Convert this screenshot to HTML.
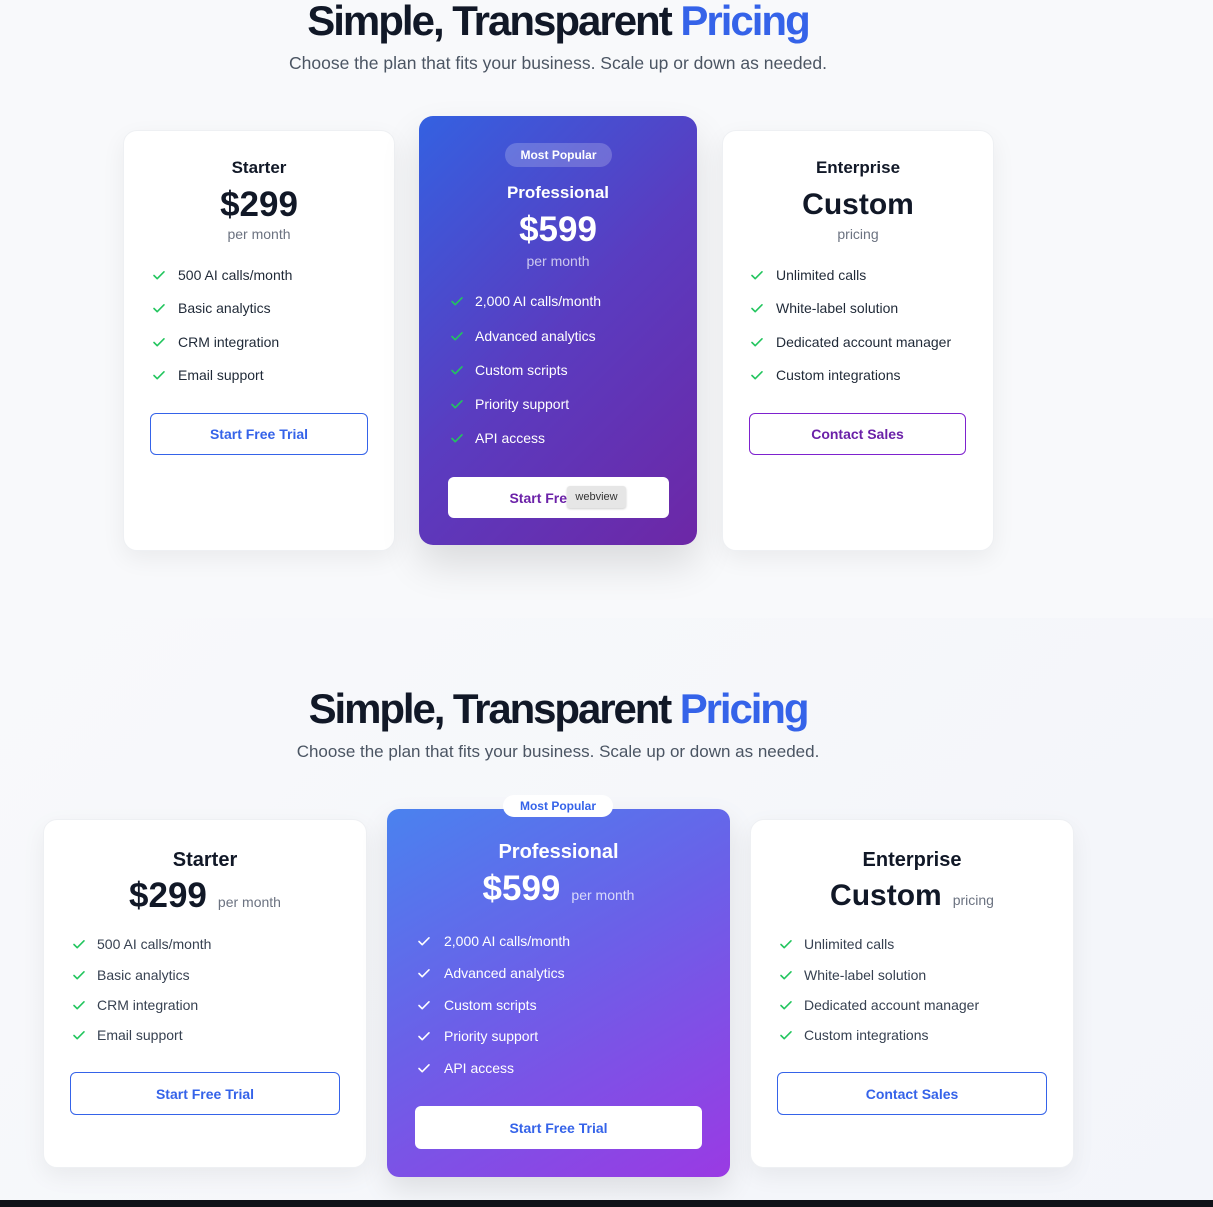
<!DOCTYPE html>
<html><head><meta charset="utf-8"><style>
*{margin:0;padding:0;box-sizing:border-box}
body{width:1213px;height:1207px;position:relative;overflow:hidden;font-family:"Liberation Sans",sans-serif;background:#f8f9fb;color:#111827}
.a{position:absolute}
.c{text-align:center;white-space:nowrap}
.sec2{left:0;top:618px;width:1213px;height:582px;background:linear-gradient(135deg,#f8f9fb,#f3f5fa)}
.card{background:#fff;border-radius:14px;box-shadow:0 8px 24px rgba(0,0,0,.06);border:1px solid #eef0f3}
h1{font-size:42px;font-weight:700;letter-spacing:-2px;color:#111827}
h1 span{color:#3563e9}
.sub{font-size:17px;color:#4b5563}
.f{font-size:14px;color:#1f2937;white-space:nowrap;line-height:17px}
.f svg{position:absolute;left:-26px;top:1px}
.btn{border-radius:6px;font-size:14px;font-weight:700;display:flex;align-items:center;justify-content:center}
</style></head><body>
<svg width="0" height="0" style="position:absolute"><defs><symbol id="ck" viewBox="0 0 14 14"><path d="M2 7.5l3.2 3.2L12 3.8" fill="none" stroke="currentColor" stroke-width="1.6" stroke-linecap="round" stroke-linejoin="round"/></symbol></defs></svg>

<!-- top section -->
<h1 class="a c" style="left:0;width:1116px;top:-4px;line-height:50px">Simple, Transparent <span>Pricing</span></h1>
<div class="a c sub" style="left:0;width:1116px;top:53px;font-size:17.5px">Choose the plan that fits your business. Scale up or down as needed.</div>

<div class="a card" style="left:123px;top:130px;width:272px;height:421px"></div>
<div class="a c" style="left:123px;width:272px;top:158px;font-size:17px;font-weight:700">Starter</div>
<div class="a c" style="left:123px;width:272px;top:185px;font-size:35px;font-weight:700">$299</div>
<div class="a c" style="left:123px;width:272px;top:226px;font-size:14px;color:#6b7280">per month</div>
<div class="a f" style="left:178px;top:267px"><svg width="14" height="14" style="color:#22c55e"><use href="#ck"/></svg>500 AI calls/month</div>
<div class="a f" style="left:178px;top:300px"><svg width="14" height="14" style="color:#22c55e"><use href="#ck"/></svg>Basic analytics</div>
<div class="a f" style="left:178px;top:334px"><svg width="14" height="14" style="color:#22c55e"><use href="#ck"/></svg>CRM integration</div>
<div class="a f" style="left:178px;top:367px"><svg width="14" height="14" style="color:#22c55e"><use href="#ck"/></svg>Email support</div>
<div class="a btn" style="left:150px;top:413px;width:218px;height:42px;border:1.5px solid #3563e9;color:#3563e9">Start Free Trial</div>

<div class="a" style="left:419px;top:116px;width:278px;height:429px;border-radius:14px;background:linear-gradient(135deg,#3461e1,#5a3cc0 50%,#6d27a6);box-shadow:0 20px 40px rgba(0,0,0,.12)"></div>
<div class="a c" style="left:505px;top:143px;width:107px;height:24px;border-radius:12px;background:rgba(255,255,255,.2);color:#fff;font-size:12px;font-weight:700;line-height:24px">Most Popular</div>
<div class="a c" style="left:419px;width:278px;top:183px;font-size:17px;font-weight:700;color:#fff">Professional</div>
<div class="a c" style="left:419px;width:278px;top:210px;font-size:35px;font-weight:700;color:#fff">$599</div>
<div class="a c" style="left:419px;width:278px;top:253px;font-size:14px;color:rgba(255,255,255,.7)">per month</div>
<div class="a f" style="left:475px;top:293px;color:#fff"><svg width="14" height="14" style="color:#22c55e;left:-25px"><use href="#ck"/></svg>2,000 AI calls/month</div>
<div class="a f" style="left:475px;top:328px;color:#fff"><svg width="14" height="14" style="color:#22c55e;left:-25px"><use href="#ck"/></svg>Advanced analytics</div>
<div class="a f" style="left:475px;top:362px;color:#fff"><svg width="14" height="14" style="color:#22c55e;left:-25px"><use href="#ck"/></svg>Custom scripts</div>
<div class="a f" style="left:475px;top:396px;color:#fff"><svg width="14" height="14" style="color:#22c55e;left:-25px"><use href="#ck"/></svg>Priority support</div>
<div class="a f" style="left:475px;top:430px;color:#fff"><svg width="14" height="14" style="color:#22c55e;left:-25px"><use href="#ck"/></svg>API access</div>
<div class="a btn" style="left:448px;top:477px;width:221px;height:41px;background:#fff;color:#6b21a8">Start Free Trial</div>
<div class="a c" style="left:567px;top:486px;width:59px;height:22px;background:#e6e6e6;border-radius:3px;box-shadow:0 1px 2px rgba(0,0,0,.2);font-size:11px;line-height:22px;color:#333">webview</div>

<div class="a card" style="left:722px;top:130px;width:272px;height:421px"></div>
<div class="a c" style="left:722px;width:272px;top:158px;font-size:17px;font-weight:700">Enterprise</div>
<div class="a c" style="left:722px;width:272px;top:188px;font-size:30px;font-weight:700">Custom</div>
<div class="a c" style="left:722px;width:272px;top:226px;font-size:14px;color:#6b7280">pricing</div>
<div class="a f" style="left:776px;top:267px"><svg width="14" height="14" style="color:#22c55e"><use href="#ck"/></svg>Unlimited calls</div>
<div class="a f" style="left:776px;top:300px"><svg width="14" height="14" style="color:#22c55e"><use href="#ck"/></svg>White-label solution</div>
<div class="a f" style="left:776px;top:334px"><svg width="14" height="14" style="color:#22c55e"><use href="#ck"/></svg>Dedicated account manager</div>
<div class="a f" style="left:776px;top:367px"><svg width="14" height="14" style="color:#22c55e"><use href="#ck"/></svg>Custom integrations</div>
<div class="a btn" style="left:749px;top:413px;width:217px;height:42px;border:1.5px solid #7e22ce;color:#6b21a8">Contact Sales</div>

<!-- bottom section -->
<div class="a sec2"></div>
<h1 class="a c" style="left:0;width:1116px;top:684px;line-height:50px;letter-spacing:-2.1px">Simple, Transparent <span>Pricing</span></h1>
<div class="a c sub" style="left:0;width:1116px;top:742px">Choose the plan that fits your business. Scale up or down as needed.</div>

<div class="a card" style="left:43px;top:819px;width:324px;height:349px"></div>
<div class="a c" style="left:43px;width:324px;top:849px;font-size:20px;font-weight:700">Starter</div>
<div class="a c" style="left:43px;width:324px;top:876px"><span style="font-size:35px;font-weight:700">$299</span><span style="font-size:14px;color:#6b7280;margin-left:11px">per month</span></div>
<div class="a f" style="left:97px;top:936px;color:#374151"><svg width="14" height="14" style="color:#22c55e;left:-25px"><use href="#ck"/></svg>500 AI calls/month</div>
<div class="a f" style="left:97px;top:967px;color:#374151"><svg width="14" height="14" style="color:#22c55e;left:-25px"><use href="#ck"/></svg>Basic analytics</div>
<div class="a f" style="left:97px;top:997px;color:#374151"><svg width="14" height="14" style="color:#22c55e;left:-25px"><use href="#ck"/></svg>CRM integration</div>
<div class="a f" style="left:97px;top:1027px;color:#374151"><svg width="14" height="14" style="color:#22c55e;left:-25px"><use href="#ck"/></svg>Email support</div>
<div class="a btn" style="left:70px;top:1072px;width:270px;height:43px;border:1.5px solid #3563e9;color:#3563e9">Start Free Trial</div>

<div class="a" style="left:387px;top:809px;width:343px;height:368px;border-radius:12px;background:linear-gradient(150deg,#4a82ef,#6b60e8 45%,#9a3ae3);box-shadow:0 12px 28px rgba(0,0,0,.1)"></div>
<div class="a c" style="left:503px;top:795px;width:110px;height:22px;border-radius:11px;background:#fff;color:#3563e9;font-size:12px;font-weight:700;line-height:22px">Most Popular</div>
<div class="a c" style="left:387px;width:343px;top:841px;font-size:20px;font-weight:700;color:#fff">Professional</div>
<div class="a c" style="left:387px;width:343px;top:869px;color:#fff"><span style="font-size:35px;font-weight:700">$599</span><span style="font-size:14px;color:rgba(255,255,255,.75);margin-left:11px">per month</span></div>
<div class="a f" style="left:444px;top:933px;color:#fff"><svg width="14" height="14" style="color:#fff;left:-27px"><use href="#ck"/></svg>2,000 AI calls/month</div>
<div class="a f" style="left:444px;top:965px;color:#fff"><svg width="14" height="14" style="color:#fff;left:-27px"><use href="#ck"/></svg>Advanced analytics</div>
<div class="a f" style="left:444px;top:997px;color:#fff"><svg width="14" height="14" style="color:#fff;left:-27px"><use href="#ck"/></svg>Custom scripts</div>
<div class="a f" style="left:444px;top:1028px;color:#fff"><svg width="14" height="14" style="color:#fff;left:-27px"><use href="#ck"/></svg>Priority support</div>
<div class="a f" style="left:444px;top:1060px;color:#fff"><svg width="14" height="14" style="color:#fff;left:-27px"><use href="#ck"/></svg>API access</div>
<div class="a btn" style="left:415px;top:1106px;width:287px;height:43px;background:#fff;color:#3563e9">Start Free Trial</div>

<div class="a card" style="left:750px;top:819px;width:324px;height:349px"></div>
<div class="a c" style="left:750px;width:324px;top:849px;font-size:20px;font-weight:700">Enterprise</div>
<div class="a c" style="left:750px;width:324px;top:879px"><span style="font-size:30px;font-weight:700">Custom</span><span style="font-size:14px;color:#6b7280;margin-left:11px">pricing</span></div>
<div class="a f" style="left:804px;top:936px;color:#374151"><svg width="14" height="14" style="color:#22c55e;left:-25px"><use href="#ck"/></svg>Unlimited calls</div>
<div class="a f" style="left:804px;top:967px;color:#374151"><svg width="14" height="14" style="color:#22c55e;left:-25px"><use href="#ck"/></svg>White-label solution</div>
<div class="a f" style="left:804px;top:997px;color:#374151"><svg width="14" height="14" style="color:#22c55e;left:-25px"><use href="#ck"/></svg>Dedicated account manager</div>
<div class="a f" style="left:804px;top:1027px;color:#374151"><svg width="14" height="14" style="color:#22c55e;left:-25px"><use href="#ck"/></svg>Custom integrations</div>
<div class="a btn" style="left:777px;top:1072px;width:270px;height:43px;border:1.5px solid #3563e9;color:#3563e9">Contact Sales</div>

<div class="a" style="left:0;top:1200px;width:1213px;height:7px;background:#0f1117"></div>
</body></html>
